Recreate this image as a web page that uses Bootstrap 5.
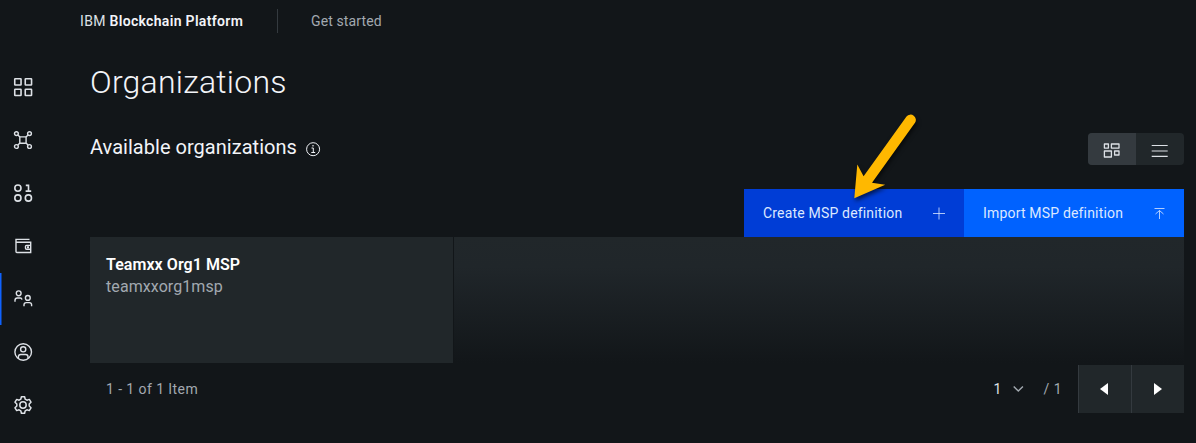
<!DOCTYPE html>
<html lang="en">
<head>
<meta charset="utf-8">
<meta name="viewport" content="width=device-width, initial-scale=1">
<title>Organizations - IBM Blockchain Platform</title>
<link href="https://cdn.jsdelivr.net/npm/bootstrap@5.3.0/dist/css/bootstrap.min.css" rel="stylesheet">
<style>
body{background:#121619;color:#f2f4f8;font-family:Roboto,"Noto Sans",sans-serif;font-size:14px;line-height:20px;height:443px;overflow:hidden}
svg{display:block;fill:none;stroke:currentColor}
.topbar{height:42px;padding-left:80px}
.brand{width:197px;color:#dde1e6;letter-spacing:.32px}
.brand b{font-weight:600;color:#f2f4f8}
.rule{width:1px;height:24px;background:#343a3f}
.started{margin-left:33px;color:#a2a9b0;letter-spacing:.12px}
.side{width:47px;padding-top:19px}
.side a{height:52px;margin-bottom:1px;padding-left:13px;color:#dde1e6}
.side a.active{box-shadow:inset 1.5px 0 #0f62fe}
.main-area{padding:20px 12px 0 43px}
.title{font-size:32px;line-height:40px;font-weight:350;letter-spacing:.22px}
.subrow{height:32px;margin-top:31px}
.subtitle{font-size:20px;line-height:28px;letter-spacing:.03px;color:#f2f4f8}
.switcher{width:96px;height:32px;border-radius:4px;background:#21272a;color:#dde1e6}
.switcher>span{width:48px}
.switcher .on{background:#343a3f}
.actions{margin-top:24px}
.action{width:220px;height:48px;border:0;border-radius:0;padding:0 18px 0 19px;background:#0062ff;color:#dce8ff;font-size:14px;letter-spacing:.18px}
.action.create{background:#003dd6}
.tiles{height:126px}
.org{width:363px;margin-right:1px;padding:17px 16px;background:#21272a;font-size:16px;line-height:22px}
.org b{font-weight:600;color:#fff;letter-spacing:.06px}
.org span{color:#a2a9b0;letter-spacing:.08px}
.fade-area{background:linear-gradient(#21272a 0,#20262a 24%,#121619 100%)}
.pager{height:48px;margin-top:2px;padding-left:16px;color:#a2a9b0;letter-spacing:.42px}
.pager .num{color:#dde1e6;width:19px}
.pager .step{width:53px;height:48px;background:#21272a;border-left:1px solid #343a3f;color:#fff}
.pager .prev{padding-right:2px}
.pager .total{margin:0 16px 0 20px}
.pointer{left:840px;top:105px;filter:drop-shadow(1px 3px 2px rgba(0,0,0,.6))}
</style>
</head>
<body class="position-relative">
<header class="topbar d-flex align-items-center">
  <div class="brand text-nowrap"><span>IBM</span> <b>Blockchain Platform</b></div>
  <div class="rule"></div>
  <div class="started">Get started</div>
</header>
<div class="d-flex">
  <nav class="side d-flex flex-column flex-shrink-0">
    <a class="d-flex align-items-center"><svg width="20" height="20" stroke-width="1.6"><rect x="1.75" y="1.75" width="6.3" height="6.3" rx=".5"/><rect x="12.25" y="1.75" width="6.3" height="6.3" rx=".5"/><rect x="1.75" y="12.2" width="6.3" height="6.3" rx=".5"/><rect x="12.25" y="12.2" width="6.3" height="6.3" rx=".5"/></svg></a>
    <a class="d-flex align-items-center"><svg width="20" height="20" stroke-width="1.4"><rect x="6.8" y="6.9" width="6.3" height="6.3" rx=".7"/><circle cx="3.4" cy="3.6" r="1.9"/><circle cx="16.5" cy="3.6" r="1.9"/><circle cx="3.4" cy="16.5" r="1.9"/><circle cx="16.5" cy="16.5" r="1.9"/><path d="M4.8 5l2.2 2.1M15.1 5l-2.2 2.1M4.8 15.1L7 13M15.1 15.1L12.9 13"/></svg></a>
    <a class="d-flex align-items-center"><svg width="20" height="20" stroke-width="1.6"><circle cx="4.9" cy="5.1" r="3.1"/><circle cx="4.9" cy="15" r="3.1"/><circle cx="15.4" cy="15" r="3.1"/><path d="M12.8 2.4h2.7v5.3M12.6 8.1h5.6"/></svg></a>
    <a class="d-flex align-items-center"><svg width="20" height="20" stroke-width="1.4"><path d="M16.5 3.4H3v12.2q0 .9.9.9h13.8V6.2H3M17.7 9.4h-4.2q-1 0-1 1v1.8q0 1 1 1h4.2"/><path d="M15 10.3v2" stroke-width="2"/></svg></a>
    <a class="active d-flex align-items-center"><svg width="20" height="20" stroke-width="1.4"><circle cx="5.7" cy="4.3" r="2.4"/><path d="M2 12.7v-1.5q0-2.2 2.2-2.2h3q1.5 0 1.8 1.7"/><circle cx="14.8" cy="8.9" r="2.4"/><path d="M11 17.3v-1.5q0-2.2 2.2-2.2h3.2q2.2 0 2.2 2.2v1.5"/></svg></a>
    <a class="d-flex align-items-center"><svg width="20" height="20" stroke-width="1.4"><circle cx="10.2" cy="10" r="8.3"/><circle cx="10.2" cy="7.3" r="2.6"/><path d="M5.4 16.3v-1.5q0-2.3 2.3-2.3h5q2.3 0 2.3 2.3v1.5"/></svg></a>
    <a class="d-flex align-items-center"><svg width="20" height="20" stroke-width="1.5" stroke-linejoin="round"><circle cx="10" cy="10" r="3.2"/><path d="M8.4 1.8h3.2l.6 2.4 1.7 1 2.4-.8 1.7 2.8-1.8 1.8v2l1.8 1.8-1.7 2.8-2.4-.8-1.7 1-.6 2.4H8.4l-.6-2.4-1.7-1-2.4.8L2 12.8l1.8-1.8V9L2 7.2l1.7-2.8 2.4.8 1.7-1z"/></svg></a>
  </nav>
  <main class="main-area flex-grow-1">
    <h1 class="title m-0">Organizations</h1>
    <div class="subrow d-flex justify-content-between">
      <div class="subtitle d-flex">Available organizations
        <svg class="ms-2 mt-2" width="16" height="16" stroke-width="1"><circle cx="8.1" cy="8.2" r="6.5"/><path d="M6.5 7h1.8v4.3M6.3 11.5h3.9"/><circle cx="8" cy="4.8" r=".5" fill="currentColor" stroke-width=".5"/></svg>
      </div>
      <div class="switcher d-flex overflow-hidden">
        <span class="on d-flex align-items-center justify-content-center"><svg width="18" height="18" stroke-width="1.3" stroke-linejoin="round"><rect x="1.4" y="4" width="4" height="4.1"/><rect x="8.4" y="4" width="7.6" height="4.1"/><rect x="1.4" y="11" width="7" height="6"/><rect x="11.6" y="11" width="4.4" height="4"/></svg></span>
        <span class="d-flex align-items-center justify-content-center"><svg width="18" height="18" stroke-width="1.2"><path d="M.7 5.5h16M.7 11h16M.7 16.4h16"/></svg></span>
      </div>
    </div>
    <div class="actions d-flex justify-content-end">
      <button class="action create d-flex align-items-center justify-content-between"><span>Create MSP definition</span><svg width="13" height="13" stroke-opacity=".8"><path d="M6 .5v12M0 6.5h12"/></svg></button>
      <button class="action d-flex align-items-center justify-content-between"><span>Import MSP definition</span><svg width="13" height="13" stroke-opacity=".8"><path d="M1.500 1.500h10M6.500 12V3.500M2.500 7l4-3.500 4 3.500"/></svg></button>
    </div>
    <div class="tiles d-flex">
      <div class="org d-flex flex-column"><b>Teamxx Org1 MSP</b><span>teamxxorg1msp</span></div>
      <div class="fade-area flex-grow-1"></div>
    </div>
    <div class="pager d-flex align-items-center">
      <span class="me-auto">1 - 1 of 1 Item</span>
      <span class="num">1</span>
      <svg width="11" height="8" stroke-width="1.400"><path d="M.7 1.500l4.600 4.600 4.600-4.600"/></svg>
      <span class="total">/ 1</span>
      <span class="step prev d-flex align-items-center justify-content-center"><svg width="8" height="12"><path d="M8 0v12L0 6z" fill="currentColor" stroke="none"/></svg></span>
      <span class="step d-flex align-items-center justify-content-center"><svg width="8" height="12"><path d="M0 0v12l8-6z" fill="currentColor" stroke="none"/></svg></span>
    </div>
  </main>
</div>
<svg class="pointer position-absolute" width="86" height="104"><path d="M14.300 93.300L17.300 59.500l6.300 11.800L66.500 11.500A5.300 5.300 0 0 1 75 17.800L32 77.700l13.200 2z" fill="#ffb800" stroke="none"/></svg>
</body>
</html>
